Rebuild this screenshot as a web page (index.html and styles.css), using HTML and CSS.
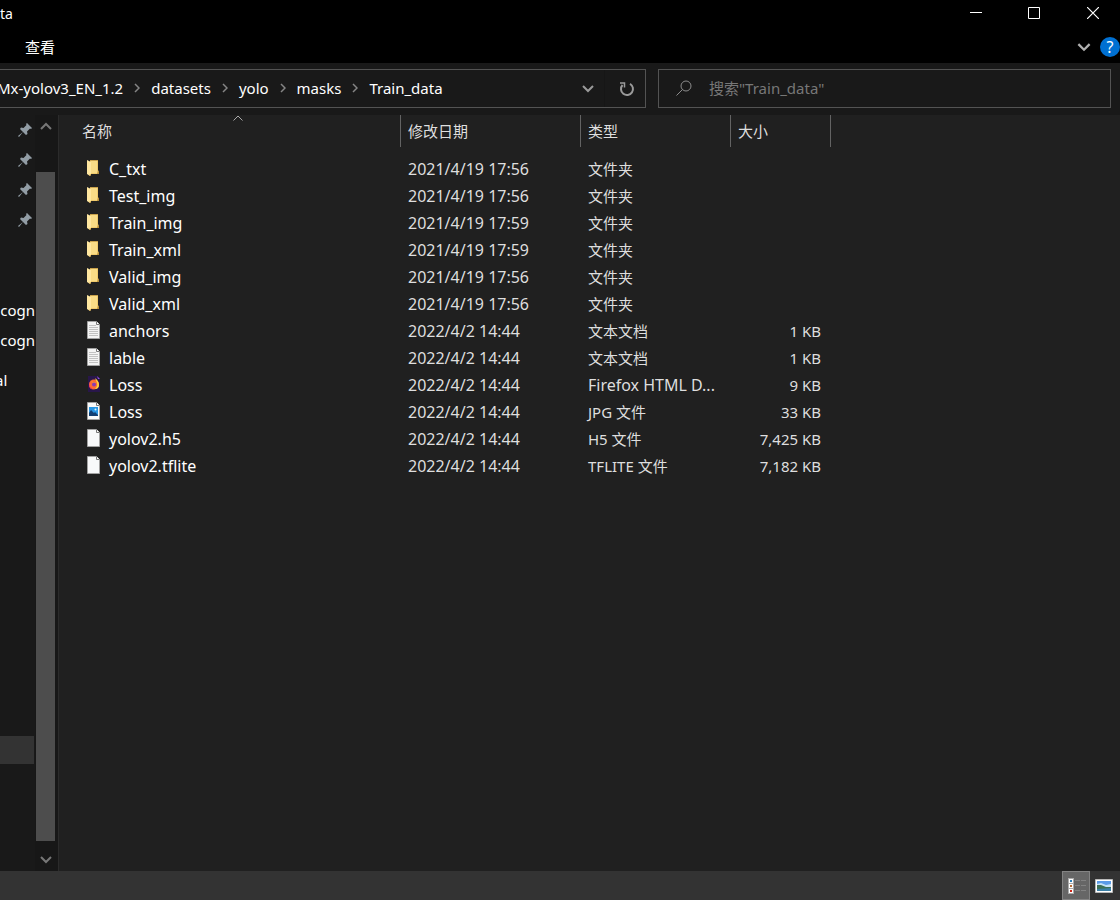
FILE: index.html
```html
<!DOCTYPE html>
<html lang="zh-CN">
<head>
<meta charset="utf-8">
<title>Train_data</title>
<link rel="stylesheet" href="styles.css">
</head>
<body>
<svg class="defs" aria-hidden="true">
  <symbol id="i-folder" viewBox="0 0 14 18">
    <path d="M3 1h8v10.500l1 .5v3H3z" fill="#f0ca6c"/>
    <path d="M3 1h8v1H3z" fill="#c9a24c"/>
    <path d="M4 2h6v12H4z" fill="#f9dc86"/>
    <path d="M0 1l4 2v12.500L3 17l-3-2z" fill="#ffe7a0"/>
    <path d="M2 16l2-1v1l-1 1z" fill="#d9ac4d"/>
    <path d="M11 12h1v3h-2z" fill="#b78f3c"/>
  </symbol>
  <symbol id="i-page" viewBox="0 0 14 18">
    <path d="M.5.5h9l3 3v14H.5z" fill="#f8f9fa" stroke="#a2a2a2"/>
    <path d="M9.500.5v3h3" fill="#fff" stroke="#777"/>
  </symbol>
  <symbol id="i-text" viewBox="0 0 14 18">
    <path d="M.5.5h9l3 3v14H.5z" fill="#f4f4f4" stroke="#a2a2a2"/>
    <path d="M9.500.5v3h3" fill="#fff" stroke="#777"/>
    <path d="M2 4.500h7M2 6.500h9M2 8.500h9M2 10.500h9M2 12.500h9M2 14.500h9" stroke="#c2c2c2"/>
  </symbol>
  <symbol id="i-jpg" viewBox="0 0 14 18">
    <path d="M.5.5h9l3 3v14H.5z" fill="#fafafa" stroke="#a2a2a2"/>
    <path d="M9.500.5v3h3" fill="#fff" stroke="#777"/>
    <path d="M2 5h9v9H2z" fill="#2896e4"/>
    <path d="M2 11l2-3 3 3 1-1 3 3v1H2z" fill="#123f73"/>
    <circle cx="8.500" cy="7.500" r="1" fill="#d9f3ff"/>
  </symbol>
  <symbol id="i-fox" viewBox="0 0 14 18">
    <path d="M1 1h9l3 3v13H1z" fill="#28164a"/>
    <path d="M10 1l1 3h2z" fill="#8f4de4"/>
    <circle cx="7" cy="9.500" r="5" fill="#ff6a32"/>
    <path d="M2 6q0 8 5 8.500Q3 15 2 11z" fill="#f5316c"/>
    <path d="M8 3q4 3 4 7t-4 4q3-3 2-6z" fill="#ffd13b"/>
    <path d="M3 5l3 2h3l-2 2z" fill="#ff9d28"/>
    <circle cx="7" cy="9.500" r="2" fill="#8b3bb4"/>
  </symbol>
  <symbol id="i-pin" viewBox="0 0 14 14">
    <path d="M9 0l5 5-1 1-1-.5-3 3 .5 2.500-1.500 1-3-3L1 14 0 13l5-4-3-3L3 4.500l2.500.5 3-3L8 1z" fill="#929da5"/>
  </symbol>
  <symbol id="i-next" viewBox="0 0 6 10"><path d="M1 1l4 4-4 4" fill="none" stroke="#858585" stroke-width="1.500"/></symbol>
  <symbol id="i-down" viewBox="0 0 12 8"><path d="M1 1l5 5 5-5" fill="none" stroke="currentColor" stroke-width="2"/></symbol>
  <symbol id="i-up" viewBox="0 0 12 8"><path d="M1 7l5-5 5 5" fill="none" stroke="currentColor" stroke-width="2"/></symbol>
</svg>
<div class="window">
  <header class="titlebar">
    <span class="title">ta</span>
    <div class="controls">
      <button class="control" aria-label="最小化"><svg width="12" height="12"><path d="M0 5.500h12" stroke="#fff"/></svg></button>
      <button class="control" aria-label="最大化"><svg width="12" height="12"><path d="M.5.5h11v11H.5z" fill="none" stroke="#fff"/></svg></button>
      <button class="control" aria-label="关闭"><svg width="12" height="12"><path d="M0 0l12 12M12 0L0 12" stroke="#fff" stroke-width="1.200"/></svg></button>
    </div>
  </header>
  <nav class="ribbon">
    <button class="tab">查看</button>
    <div class="ribbon-tools">
      <button class="expand" aria-label="展开功能区"><svg width="14" height="9"><use href="#i-down"/></svg></button>
      <button class="help" aria-label="帮助">?</button>
    </div>
  </nav>
  <div class="toolbar">
    <div class="address">
      <div class="crumbs">
        <a href="#">Mx-yolov3_EN_1.2</a><svg class="next"><use href="#i-next"/></svg>
        <a href="#">datasets</a><svg class="next"><use href="#i-next"/></svg>
        <a href="#">yolo</a><svg class="next"><use href="#i-next"/></svg>
        <a href="#">masks</a><svg class="next"><use href="#i-next"/></svg>
        <a href="#">Train_data</a>
      </div>
      <button class="history" aria-label="以前的位置"><svg width="12" height="8"><use href="#i-down"/></svg></button>
      <button class="refresh" aria-label="刷新"><svg width="16" height="16" fill="none" stroke="#9a9a9a" stroke-width="2"><path d="M11 2.800A6 6 0 1 1 3.500 4"/><path d="M1 2h4.500v4.500" stroke-width="1.500"/></svg></button>
    </div>
    <label class="search">
      <svg width="16" height="16" fill="none" stroke="#8c8c8c"><circle cx="10" cy="6" r="5"/><path d="M6.500 9.500L.5 15.500"/></svg>
      <input type="search" aria-label="搜索" placeholder="搜索&quot;Train_data&quot;">
    </label>
  </div>
  <div class="content">
    <aside class="side">
      <ul class="tree">
        <li><svg class="pin"><use href="#i-pin"/></svg></li>
        <li><svg class="pin"><use href="#i-pin"/></svg></li>
        <li><svg class="pin"><use href="#i-pin"/></svg></li>
        <li><svg class="pin"><use href="#i-pin"/></svg></li>
        <li class="folders"><a href="#">cogn</a></li>
        <li><a href="#">cogn</a></li>
        <li class="cloud"><a href="#">al</a></li>
        <li class="selected"></li>
      </ul>
      <div class="scrollbar">
        <button aria-label="向上滚动"><svg width="12" height="8"><use href="#i-up"/></svg></button>
        <div class="track"><div class="thumb"></div></div>
        <button aria-label="向下滚动"><svg width="12" height="8"><use href="#i-down"/></svg></button>
      </div>
    </aside>
    <main class="files">
      <table>
        <colgroup><col class="c-name"><col class="c-date"><col class="c-type"><col class="c-size"></colgroup>
        <thead><tr>
          <th>名称<svg class="sort" width="10" height="6"><path d="M.5 5.500L5 1l4.500 4.500" fill="none" stroke="#aaa"/></svg></th>
          <th>修改日期</th><th>类型</th><th>大小</th>
        </tr></thead>
        <tbody>
          <tr><td><svg class="icon"><use href="#i-folder"/></svg>C_txt</td><td>2021/4/19 17:56</td><td>文件夹</td><td></td></tr>
          <tr><td><svg class="icon"><use href="#i-folder"/></svg>Test_img</td><td>2021/4/19 17:56</td><td>文件夹</td><td></td></tr>
          <tr><td><svg class="icon"><use href="#i-folder"/></svg>Train_img</td><td>2021/4/19 17:59</td><td>文件夹</td><td></td></tr>
          <tr><td><svg class="icon"><use href="#i-folder"/></svg>Train_xml</td><td>2021/4/19 17:59</td><td>文件夹</td><td></td></tr>
          <tr><td><svg class="icon"><use href="#i-folder"/></svg>Valid_img</td><td>2021/4/19 17:56</td><td>文件夹</td><td></td></tr>
          <tr><td><svg class="icon"><use href="#i-folder"/></svg>Valid_xml</td><td>2021/4/19 17:56</td><td>文件夹</td><td></td></tr>
          <tr><td><svg class="icon"><use href="#i-text"/></svg>anchors</td><td>2022/4/2 14:44</td><td>文本文档</td><td>1 KB</td></tr>
          <tr><td><svg class="icon"><use href="#i-text"/></svg>lable</td><td>2022/4/2 14:44</td><td>文本文档</td><td>1 KB</td></tr>
          <tr><td><svg class="icon"><use href="#i-fox"/></svg>Loss</td><td>2022/4/2 14:44</td><td class="latin">Firefox HTML D...</td><td>9 KB</td></tr>
          <tr><td><svg class="icon"><use href="#i-jpg"/></svg>Loss</td><td>2022/4/2 14:44</td><td>JPG 文件</td><td>33 KB</td></tr>
          <tr><td><svg class="icon"><use href="#i-page"/></svg>yolov2.h5</td><td>2022/4/2 14:44</td><td>H5 文件</td><td>7,425 KB</td></tr>
          <tr><td><svg class="icon"><use href="#i-page"/></svg>yolov2.tflite</td><td>2022/4/2 14:44</td><td>TFLITE 文件</td><td>7,182 KB</td></tr>
        </tbody>
      </table>
    </main>
  </div>
  <footer class="status">
    <button class="view active" aria-label="详细信息">
      <svg width="20" height="18">
        <path d="M2 1h6v16H2z" fill="#aaa"/>
        <path d="M3 2h4v4H3zM3 7h4v4H3zM3 12h4v4H3z" fill="#fff"/>
        <path d="M4 3h2v2H4z" fill="#2d7fb8"/><path d="M4 8h2v2H4z" fill="#b46a35"/><path d="M4 13h2v2H4z" fill="#d02418"/>
        <path d="M9 3.500h5M15 3.500h5M9 8.500h5M15 8.500h5M9 13.500h5M15 13.500h5" stroke="#828282"/>
      </svg>
    </button>
    <button class="view" aria-label="大缩略图">
      <svg width="18" height="14">
        <path d="M.5.5h17v13H.5z" fill="#fff" stroke="#b9b9b9"/>
        <path d="M2 2h14v10H2z" fill="#5b9be8"/>
        <path d="M2 5l4-1 5 2 5-1v3H2z" fill="#c5e2f7"/>
        <path d="M2 6h4l5 2h5v2H2z" fill="#3d7056"/>
        <path d="M2 10l14-1v3H2z" fill="#3a7fa5"/>
      </svg>
    </button>
  </footer>
</div>
</body>
</html>
```
FILE: styles.css
```css
* { box-sizing: border-box; }
body {
  margin: 0;
  background: #191919;
  color: #fff;
  font: 15px/20px "Noto Sans", "Noto Sans CJK SC", sans-serif;
}
button {
  display: flex;
  align-items: center;
  justify-content: center;
  padding: 0;
  border: 0;
  background: none;
  color: inherit;
  font: inherit;
}
a { color: inherit; text-decoration: none; }
svg { display: block; flex: none; }
.defs { position: absolute; width: 0; height: 0; }
.window { display: flex; flex-direction: column; height: 100vh; overflow: hidden; }

.titlebar { display: flex; justify-content: space-between; height: 27px; background: #000; }
.title { padding-top: 4px; font-size: 14px; }
.controls { display: flex; margin-right: -1px; }
.control { width: 58px; height: 26px; }
.control:last-child { width: 56px; margin-left: 2px; }

.ribbon { display: flex; justify-content: space-between; height: 36px; padding-left: 25px; background: #000; }
.tab { height: 40px; }
.ribbon-tools { display: flex; align-items: center; gap: 9px; height: 40px; }
.expand { color: #b0b0b0; }
.help { width: 20px; height: 20px; border-radius: 50%; background: #0070d2; font-size: 16px; }

.toolbar {
  display: grid;
  grid-template-columns: minmax(0, 646fr) minmax(0, 453fr);
  gap: 12px;
  height: 52px;
  padding: 6px 9px 7px 0;
}
.address { display: flex; border: 1px solid #535353; border-left: 0; }
.crumbs { display: flex; flex: 1; align-items: center; min-width: 0; margin-left: -3px; padding-bottom: 1px; white-space: nowrap; }
.next { width: 6px; height: 10px; margin: 0 11px; }
.history { width: 34px; color: #9a9a9a; border-right: 1px solid #161616; }
.refresh { width: 40px; padding-left: 3px; }
.search { display: flex; align-items: center; gap: 17px; padding: 0 0 1px 17px; border: 1px solid #535353; }
.search input { flex: 1; min-width: 0; padding: 0; border: 0; outline: 0; background: none; color: #fff; font: inherit; }
.search input::placeholder { color: #777; opacity: 1; }

.content { display: flex; flex: 1; min-height: 0; }
.side { display: flex; width: 59px; border-right: 1px solid #2b2b2b; }
.tree { flex: 1; min-width: 0; margin: 0; padding: 0; list-style: none; overflow: hidden; }
.tree li { display: flex; align-items: center; justify-content: flex-end; height: 30px; }
.pin { width: 14px; height: 14px; margin-right: 3px; }
.tree .folders { margin-top: 60px; }
.tree .cloud { margin-top: 10px; justify-content: flex-start; }
.tree .cloud a { margin-left: -5px; }
.tree .selected { height: 28px; margin: 341px 1px 0 0; background: #333; }
.scrollbar { display: flex; flex-direction: column; width: 23px; padding: 0 3px 0 1px; background: #171717; color: #777; }
.scrollbar button { height: 22px; }
.track { flex: 1; padding: 35px 0 8px; }
.thumb { height: 100%; background: #4d4d4d; }

.files { flex: 1; min-width: 0; background: #202020; }
table { table-layout: fixed; width: 772px; border-collapse: separate; border-spacing: 0; }
.c-name { width: 342px; }
.c-date { width: 180px; }
.c-type { width: 150px; }
.c-size { width: 100px; }
th { position: relative; height: 32px; padding: 0 0 0 7px; border-right: 1px solid #636363; text-align: left; font-weight: 400; color: #dedede; }
th:first-child { padding-left: 23px; }
.sort { position: absolute; top: 0; left: calc(50% + 3px); }
tbody::before { display: block; height: 8px; content: ""; }
td { height: 27px; padding: 0 0 0 7px; white-space: nowrap; color: #dedede; }
td:first-child { display: flex; align-items: center; gap: 8px; padding-left: 28px; color: #fff; font-size: 16px; }
td:nth-child(2), td.latin { font-size: 16px; }
td:last-child { padding: 0 10px 0 0; text-align: right; }
.icon { width: 14px; height: 18px; margin-bottom: 2px; }

.status { display: flex; justify-content: flex-end; height: 29px; padding-right: 2px; background: #333; }
.view { width: 28px; }
.view.active { border: 1px solid #838383; background: #666; }
```
